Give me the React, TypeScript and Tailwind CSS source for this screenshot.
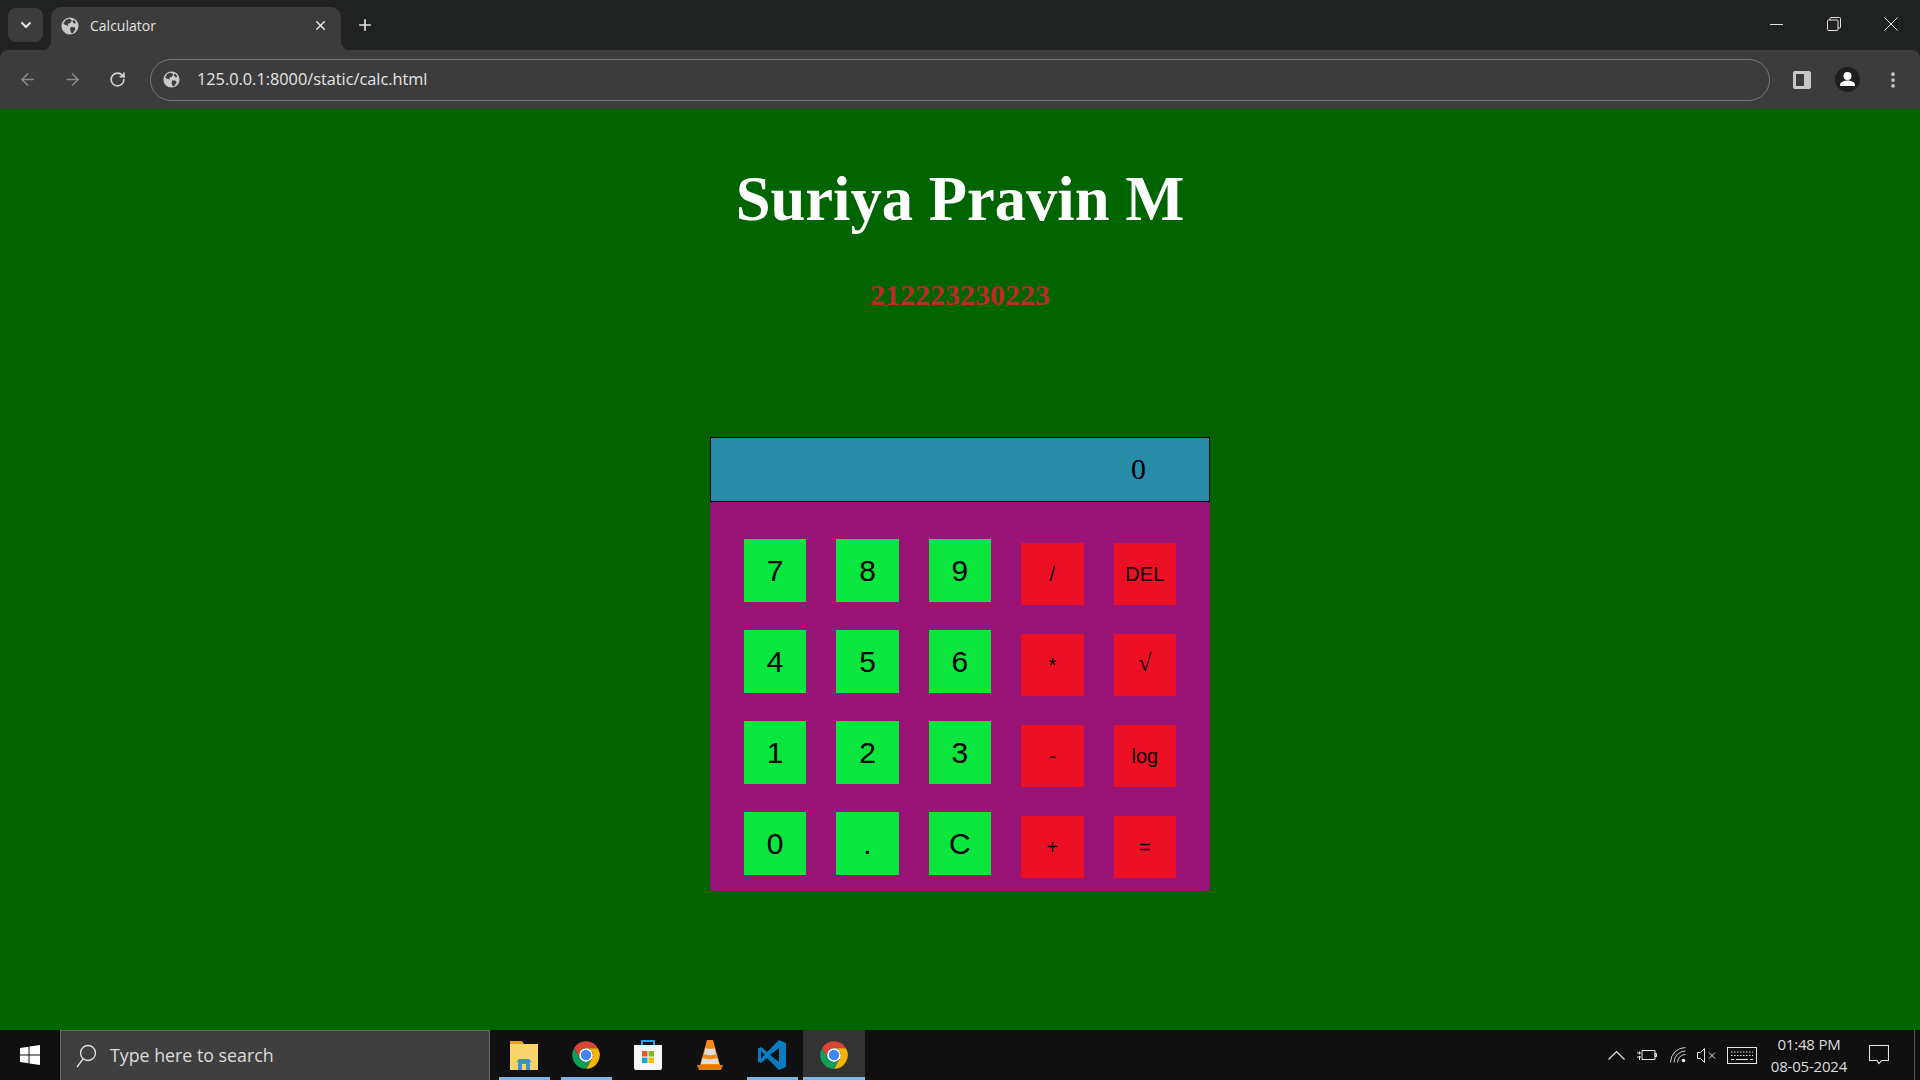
import { ChevronDown, X, Plus, ArrowLeft, ArrowRight, RotateCw, EllipsisVertical } from "lucide-react";

const Globe = ({ size }: { size: number }) => (
  <svg width={size} height={size} viewBox="0 0 20 20">
    <circle cx="10" cy="10" r="9.5" fill="#c7c9cb" />
    <path d="M5 3.5 8.5 2c2 .5 3 1 3.5 2.5L10 7l-2.5.5L8 10 5 9 2.5 7.5ZM11 11l4 .5 1 2-3 4.5h-1.5L10 14ZM14 3l3 3.5-2 1-2.5-2.5Z" fill="#3c3c3c" />
  </svg>
);

const ChromeLogo = () => (
  <svg width="30" height="30" viewBox="0 0 24 24">
    <path d="M21.53 6.5A11 11 0 0 0 2.47 6.5L7.24 14.75A5.5 5.5 0 0 1 12 6.5Z" fill="#db4437" />
    <path d="M21.53 6.5A11 11 0 0 1 12 23L16.76 14.75A5.5 5.5 0 0 0 12 6.5Z" fill="#f4b400" />
    <path d="M12 23A11 11 0 0 1 2.47 6.5L7.24 14.75A5.5 5.5 0 0 0 16.76 14.75Z" fill="#0f9d58" />
    <circle cx="12" cy="12" r="5.5" fill="#fff" />
    <circle cx="12" cy="12" r="4.2" fill="#4285f4" />
  </svg>
);

const BrowserBar = () => (
  <div className="bg-[#202221] h-[109px] shrink-0 flex flex-col font-['Open_Sans',sans-serif]">
    <div className="h-[50px] flex items-end shrink-0">
      <div className="w-[35px] h-[34px] ml-2 mb-2 rounded-lg bg-[#3c3c3c] flex items-center justify-center text-[#e3e3e3]">
        <ChevronDown size={16} strokeWidth={3} />
      </div>
      <div className="relative w-[290px] h-[43px] ml-2 rounded-t-[10px] bg-[#3c3c3c] flex items-center pl-[10px] pb-[6px]">
        <svg className="absolute -left-2 bottom-0" width="8" height="8" viewBox="0 0 8 8">
          <path d="M8 0V8H0A8 8 0 0 0 8 0Z" fill="#3c3c3c" />
        </svg>
        <svg className="absolute -right-2 bottom-0" width="8" height="8" viewBox="0 0 8 8">
          <path d="M0 0V8H8A8 8 0 0 1 0 0Z" fill="#3c3c3c" />
        </svg>
        <Globe size={18} />
        <span className="ml-[11px] text-[14px] text-[#e3e3e3] leading-none">Calculator</span>
        <X size={15} strokeWidth={2.4} className="ml-auto mr-[13px] text-[#e3e3e3]" />
      </div>
      <Plus size={18} strokeWidth={2.2} className="ml-[15px] mb-[16px] text-[#e3e3e3]" />
      <div className="ml-auto flex h-[50px] text-[#e3e3e3]">
        <div className="w-[57px] flex items-center justify-center pb-[2px]">
          <div className="w-[13px] h-px bg-[#e3e3e3]" />
        </div>
        <div className="w-[57px] flex items-center justify-center pb-[2px]">
          <svg width="14" height="14" viewBox="0 0 14 14" fill="none" stroke="#e3e3e3">
            <rect x="0.5" y="3" width="10.5" height="10.5" rx="1" />
            <path d="M3 3V1.5a1 1 0 0 1 1-1h8.5a1 1 0 0 1 1 1V10a1 1 0 0 1-1 1H11" />
          </svg>
        </div>
        <div className="w-[58px] flex items-center justify-center pb-[2px] pr-px">
          <svg width="14" height="14" viewBox="0 0 14 14" stroke="#e3e3e3">
            <path d="M.5.5l13 13M13.5.5l-13 13" />
          </svg>
        </div>
      </div>
    </div>
    <div className="flex-1 bg-[#3c3c3c] rounded-t-[8px] flex items-center pl-1 pr-[5px]">
      <div className="w-[46px] flex justify-center text-[#8b8b8b]"><ArrowLeft size={19} strokeWidth={2} /></div>
      <div className="w-[44px] flex justify-center text-[#8b8b8b]"><ArrowRight size={19} strokeWidth={2} /></div>
      <div className="w-[46px] flex justify-center text-[#d5d5d5]"><RotateCw size={17} strokeWidth={2.4} /></div>
      <div className="flex-1 ml-[10px] h-[42px] rounded-full border border-[#7b7b7b] flex items-center pl-[12px]">
        <Globe size={17} />
        <span className="ml-[17px] text-[16.3px] text-[#e6e6e6] leading-none">125.0.0.1:8000/static/calc.html</span>
      </div>
      <div className="ml-[10px] w-[45px] flex justify-center pr-[2px]">
        <div className="w-[18px] h-[18px] rounded-[2px] bg-[#c7c7c7] flex pl-[3px] py-[3px]">
          <div className="w-[8px] h-full bg-[#3c3c3c]" />
        </div>
      </div>
      <div className="w-[45px] flex justify-center">
        <svg width="25" height="25" viewBox="0 0 25 25">
          <circle cx="12.5" cy="12.5" r="12.5" fill="#1f1f1f" />
          <circle cx="12.5" cy="9" r="4" fill="#fff" />
          <path d="M5 18c0-3 4-4.5 7.500-4.500S20 15 20 18c0 1-.5 1-1 1H6c-.5 0-1 0-1-1Z" fill="#fff" />
        </svg>
      </div>
      <div className="w-[45px] flex justify-center text-[#c7c7c7]"><EllipsisVertical size={20} strokeWidth={2.5} /></div>
    </div>
  </div>
);

const NumberKey = ({ label }: { label: string }) => (
  <button className="h-[63px] pb-px bg-[#0ae63d] text-[30px] text-black flex items-center justify-center">{label}</button>
);

const ActionKey = ({ label }: { label: string }) => (
  <button className="h-[62px] mt-1 bg-[#ed0f23] text-[20px] text-black flex items-center justify-center">
    {label === "√" ? <span className="font-['Liberation_Serif',serif] text-[24px] font-light pb-1">{label}</span> : label}
  </button>
);

const rows = [
  ["7", "8", "9", "/", "DEL"],
  ["4", "5", "6", "*", "√"],
  ["1", "2", "3", "-", "log"],
  ["0", ".", "C", "+", "="],
];

const Calculator = () => (
  <div className="w-[500px] mx-auto mt-[125px] bg-[#9a1478]">
    <div className="h-[65px] pb-[2px] bg-[#288da8] border border-black flex items-center justify-end pr-[63px] font-['Liberation_Serif',serif] text-[30px] text-black">
      0
    </div>
    <div className="grid grid-cols-[repeat(5,62.5px)] gap-x-[29.95px] gap-y-[25px] items-start pl-[33.8px] pt-[37px] pb-[13px] font-['Liberation_Sans',sans-serif]">
      {rows.map((row) =>
        row.map((label, i) =>
          i < 3 ? <NumberKey key={label} label={label} /> : <ActionKey key={label} label={label} />
        )
      )}
    </div>
  </div>
);

const Taskbar = () => (
  <div className="h-[50px] shrink-0 bg-[#101010] flex items-stretch font-['Open_Sans',sans-serif] text-[#e6e6e6]">
    <div className="w-[60px] flex items-center justify-center">
      <svg width="20" height="20" viewBox="0 0 20 20" fill="#fff">
        <path d="M0 3l8.500-1.200V9.500H0ZM9.500 1.600 20 0v9.500H9.500ZM0 10.500h8.500v7.700L0 17ZM9.500 10.500H20V20L9.500 18.400Z" />
      </svg>
    </div>
    <div className="w-[430px] bg-[#3f3f3f] border-t border-x border-[#6a6a6a] flex items-center pl-[14px]">
      <svg width="22" height="24" viewBox="0 0 22 24" fill="none" stroke="#e6e6e6" strokeWidth="1.300">
        <circle cx="13" cy="9" r="7.500" />
        <path d="M8 15 2 23" />
      </svg>
      <span className="ml-[13px] text-[17.8px] text-[#dcdcdc] leading-none">Type here to search</span>
    </div>
    <div className="ml-[3px] flex">
      <div className="relative w-[62px] flex items-center justify-center">
        <svg width="30" height="34" viewBox="0 0 30 34">
          <path d="M1 3h12l2 3H1Z" fill="#e0a416" />
          <path d="M1 6h28v26H1Z" fill="#fbd36b" />
          <path d="M9 32V24H7l3-3h10l3 3h-2v8h-4v-6h-4v6Z" fill="#3d8fd1" />
        </svg>
        <div className="absolute bottom-0 left-[6px] w-[51px] h-[3px] bg-[#76b9ed]" />
      </div>
      <div className="relative w-[62px] flex items-center justify-center">
        <ChromeLogo />
        <div className="absolute bottom-0 left-[6px] w-[51px] h-[3px] bg-[#76b9ed]" />
      </div>
      <div className="w-[62px] flex items-center justify-center">
        <svg width="30" height="32" viewBox="0 0 30 32">
          <path d="M9 7V2h12v5" fill="none" stroke="#16a5e6" strokeWidth="2" />
          <path d="M1 6h28v23a2 2 0 0 1-2 2H3a2 2 0 0 1-2-2Z" fill="#f7f7f7" />
          <path d="M9 12h5.500v5.500H9Z" fill="#e8542b" />
          <path d="M15.500 12H21v5.500h-5.500Z" fill="#7db927" />
          <path d="M9 18.500h5.500V24H9Z" fill="#16a5e6" />
          <path d="M15.500 18.500H21V24h-5.500Z" fill="#fbbc09" />
        </svg>
      </div>
      <div className="w-[62px] flex items-center justify-center">
        <svg width="28" height="32" viewBox="0 0 28 32">
          <path d="M11 1h6l7 25H4Z" fill="#f28a13" />
          <path d="M9.500 9c2 1.200 7 1.200 9 0l1.500 6c-3 1.500-9 1.500-12 0ZM6.500 19c3 1.500 12 1.500 15 0l1.500 6H5Z" fill="#dedede" />
          <path d="M1 26h26l-2 5H3Z" fill="#e27a0a" />
        </svg>
      </div>
      <div className="relative w-[62px] flex items-center justify-center">
        <svg width="32" height="32" viewBox="0 0 32 32">
          <path d="M23 1 30 4v24l-7 3-12-12-6 5-3-1.500v-13L5 8l6 5Z" fill="#0a7cc4" />
          <path d="M23 9 14 16l9 7Z" fill="#101010" />
          <path d="M5 12v8l3.500-4Z" fill="#101010" />
        </svg>
        <div className="absolute bottom-0 left-[6px] w-[51px] h-[3px] bg-[#76b9ed]" />
      </div>
      <div className="relative w-[62px] bg-[#333333] flex items-center justify-center">
        <ChromeLogo />
        <div className="absolute bottom-0 inset-x-0 h-[3px] bg-[#76b9ed]" />
      </div>
    </div>
    <div className="ml-auto flex items-center">
      <svg width="17" height="10" viewBox="0 0 17 10" fill="none" stroke="#e6e6e6" strokeWidth="1.200">
        <path d="M.5 9.500 8.500 1.500l8 8" />
      </svg>
      <svg className="ml-3" width="20" height="12" viewBox="0 0 20 12" fill="none" stroke="#e6e6e6">
        <path d="M5 1.500h13v9H5ZM18 4.500h1.500v3H18ZM0 4h4M0 8h4M2.500 2.500v3M2.500 7v4" />
      </svg>
      <svg className="ml-[13px]" width="16" height="16" viewBox="0 0 16 16" fill="none" stroke="#cfcfcf">
        <path d="M.5 15.500A15 15 0 0 1 15.500.500M4 15.500A11.500 11.500 0 0 1 15.500 4M7.500 15.500a8 8 0 0 1 8-8" />
        <circle cx="13.500" cy="13.500" r="1.800" fill="#e6e6e6" stroke="none" />
      </svg>
      <svg className="ml-[11px]" width="19" height="15" viewBox="0 0 19 15" fill="none" stroke="#e6e6e6">
        <path d="M.5 4.500h3L7.500.500v14l-4-4h-3ZM12 4.500l6 6M18 4.500l-6 6" />
      </svg>
      <svg className="ml-[11px]" width="30" height="17" viewBox="0 0 30 17" fill="none" stroke="#e6e6e6">
        <rect x="0.500" y="0.500" width="29" height="16" />
        <path d="M4 5h22M4 8.500h22" strokeDasharray="1.500 1.500" />
        <path d="M4 12.500h3M9 12.500h12M23 12.500h3" />
      </svg>
      <div className="w-[104px] pb-px flex flex-col items-center text-[15px] tracking-[-0.2px] leading-[22px] text-[#dcdcdc]">
        <span>01:48 PM</span>
        <span>08-05-2024</span>
      </div>
      <svg className="ml-[8px]" width="20" height="20" viewBox="0 0 20 20" fill="none" stroke="#e6e6e6" strokeWidth="1.100">
        <path d="M.5.500h19v15h-7L10 18.500 8 15.500H.5Z" />
      </svg>
      <div className="ml-[25px] w-px h-full bg-[#555555]" />
      <div className="w-[5px]" />
    </div>
  </div>
);

export default function App() {
  return (
    <div className="w-[1920px] h-[1080px] flex flex-col overflow-hidden">
      <BrowserBar />
      <main className="flex-1 bg-[#006400] font-['Liberation_Serif',serif] pt-[53px]">
        <h1 className="text-center text-[62.6px] leading-[74px] font-bold text-white">Suriya Pravin M</h1>
        <h2 className="mt-[41px] text-center text-[30px] leading-[35px] font-bold text-[#bc2a2a]">212223230223</h2>
        <Calculator />
      </main>
      <Taskbar />
    </div>
  );
}
